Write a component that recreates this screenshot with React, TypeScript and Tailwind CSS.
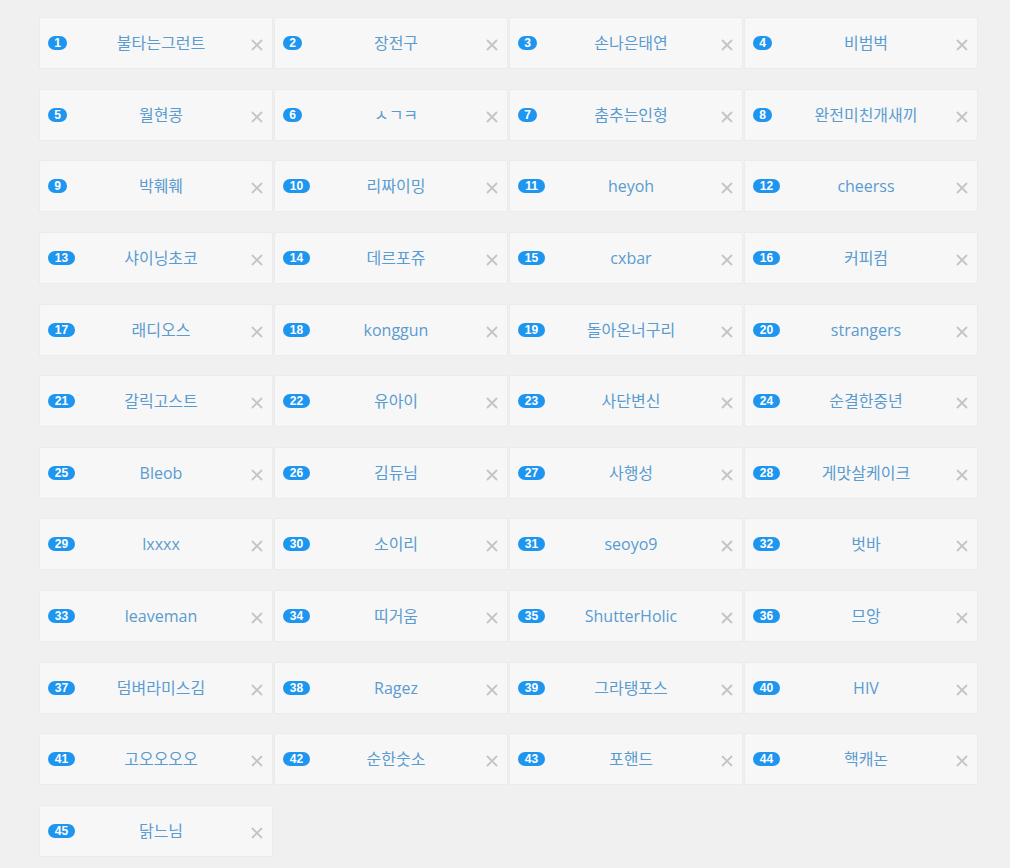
import React from "react";

const names = [
  "불타는그런트", "장전구", "손나은태연", "비범벅",
  "월현콩", "ㅅㄱㅋ", "춤추는인형", "완전미친개새끼",
  "박훼훼", "리짜이밍", "heyoh", "cheerss",
  "샤이닝초코", "데르포쥬", "cxbar", "커피컴",
  "래디오스", "konggun", "돌아온너구리", "strangers",
  "갈릭고스트", "유아이", "사단변신", "순결한중년",
  "Bleob", "김듀님", "사행성", "게맛살케이크",
  "lxxxx", "소이리", "seoyo9", "벗바",
  "leaveman", "띠거움", "ShutterHolic", "므앙",
  "덤벼라미스김", "Ragez", "그라탱포스", "HIV",
  "고오오오오", "순한숫소", "포핸드", "핵캐논",
  "닭느님",
];

function Card({ n, name }: { n: number; name: string }) {
  return (
    <div className="relative h-[52px] bg-[#f7f7f7] border border-[#ebebeb] rounded-[2px] flex items-center justify-center pl-[30px] pr-[20px]">
      <span
        className={`absolute left-[8px] top-[18px] h-[14px] rounded-full bg-[#1e96f0] text-white text-[12px] leading-[14px] font-bold flex items-center justify-center ${
          n < 10 ? "w-[19px]" : "w-[27px]"
        }`}
        style={{ fontFamily: "'Liberation Sans', 'DejaVu Sans', sans-serif" }}
      >
        {n}
      </span>
      <span
        className="text-[16px] text-[#5a9bd0] whitespace-nowrap"
        style={{ fontFamily: "'Open Sans', 'Noto Sans CJK KR', sans-serif" }}
      >
        {name}
      </span>
      <svg
        className="absolute right-[9px] top-[21px]"
        width="12"
        height="12"
        viewBox="0 0 12 12"
      >
        <path d="M1 1L11 11M11 1L1 11" stroke="#c4c4c4" strokeWidth="1.8" />
      </svg>
    </div>
  );
}

export default function App() {
  return (
    <div className="min-h-[868px] w-full bg-[#f0f0f0] pt-[17px] pl-[39px]">
      <div className="grid grid-cols-[repeat(4,234px)] gap-x-px gap-y-[19.64px]">
        {names.map((name, i) => (
          <Card key={i} n={i + 1} name={name} />
        ))}
      </div>
    </div>
  );
}
